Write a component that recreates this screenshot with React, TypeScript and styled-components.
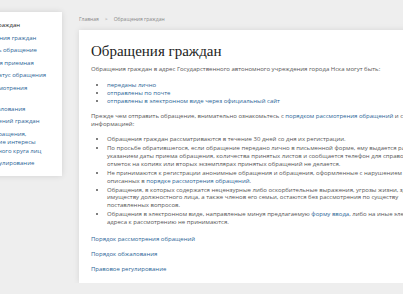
import React from "react";
import styled, { createGlobalStyle } from "styled-components";

const GlobalStyle = createGlobalStyle`
  html, body {
    margin: 0;
    padding: 0;
    background: #eeeeee;
    overflow: hidden;
  }
  body {
    font-family: "Open Sans", "Noto Sans", sans-serif;
    color: #555;
  }
`;

const sideItems = [
  { label: "Обращения граждан", active: true },
  { label: "Виды обращения граждан" },
  { label: "Как отправить обращение" },
  { label: "Общественная приемная" },
  { label: "Проверить статус обращения" },
  { label: "Порядок рассмотрения" },
  { label: "Порядок обжалования", group: true },
  { label: "Обзор обращений граждан" },
  { label: "Ответы на обращения, затрагивающие интересы неопределенного круга лиц" },
  { label: "Правовое регулирование" },
];

function App() {
  return (
    <>
      <GlobalStyle />
      <Page>
        <Sidebar>
          {sideItems.map((item) => (
            <SideLink key={item.label} $active={item.active} $group={item.group}>
              {item.label}
            </SideLink>
          ))}
        </Sidebar>

        <Main>
          <Breadcrumbs>
            <Crumb>Главная</Crumb>
            <Sep>&gt;</Sep>
            <Crumb>Обращения граждан</Crumb>
          </Breadcrumbs>

          <Card>
            <Title>Обращения граждан</Title>
            <Paragraph>
              Обращения граждан в адрес Государственного автономного учреждения города Нска могут быть:
            </Paragraph>
            <List>
              <Item><Link>переданы лично</Link></Item>
              <Item><Link>отправлены по почте</Link></Item>
              <Item><Link>отправлены в электронном виде через официальный сайт</Link></Item>
            </List>

            <Paragraph>
              Прежде чем отправить обращение, внимательно ознакомьтесь с{" "}
              <Link>порядком рассмотрения обращений</Link> и следующей
              <br />
              информацией:
            </Paragraph>
            <List $rules>
              <Item $rules>Обращения граждан рассматриваются в течение 30 дней со дня их регистрации.</Item>
              <Item $rules>
                По просьбе обратившегося, если обращение передано лично в письменной форме, ему выдается расписка с
                <br />
                указанием даты приема обращения, количества принятых листов и сообщается телефон для справок. Подобных
                <br />
                отметок на копиях или вторых экземплярах принятых обращений не делается.
              </Item>
              <Item $rules>
                Не принимаются к регистрации анонимные обращения и обращения, оформленные с нарушением требований,
                <br />
                описанных в <Link>порядке рассмотрения обращений</Link>.
              </Item>
              <Item $rules>
                Обращения, в которых содержатся нецензурные либо оскорбительные выражения, угрозы жизни, здоровью и
                <br />
                имуществу должностного лица, а также членов его семьи, остаются без рассмотрения по существу
                <br />
                поставленных вопросов.
              </Item>
              <Item $rules>
                Обращения в электронном виде, направленые минуя предлагаемую <Link>форму ввода</Link>, либо на иные электронные
                <br />
                адреса к рассмотрению не принимаются.
              </Item>
            </List>

            <Footer>
              <Link>Порядок рассмотрения обращений</Link>
              <Link>Порядок обжалования</Link>
              <Link>Правовое регулирование</Link>
            </Footer>
          </Card>
        </Main>
      </Page>
    </>
  );
}

export default App;

const Page = styled.div`
  display: flex;
  align-items: flex-start;
  gap: 17px;
  margin-left: -53px;
  padding-top: 12px;
`;

const Sidebar = styled.nav`
  flex: none;
  width: 115px;
  box-sizing: border-box;
  padding: 9px 11px 8px 12px;
  background: #fff;
  box-shadow: 0 0 6px rgba(0, 0, 0, 0.12);
  display: flex;
  flex-direction: column;
  gap: 4px;
`;

const SideLink = styled.a<{ $active?: boolean; $group?: boolean }>`
  font-size: 6px;
  line-height: 8.5px;
  color: ${(p) => (p.$active ? "#222" : "#2a6496")};
  margin-top: ${(p) => (p.$group ? "8.5px" : "0")};
  cursor: pointer;
`;

const Main = styled.div`
  flex: none;
  display: flex;
  flex-direction: column;
`;

const Breadcrumbs = styled.div`
  display: flex;
  align-items: center;
  gap: 6px;
  height: 14px;
  margin-bottom: 4px;
  font-size: 5px;
  color: #888;
`;

const Crumb = styled.span``;

const Sep = styled.span`
  color: #999;
`;

const Card = styled.div`
  width: 440px;
  box-sizing: border-box;
  padding: 12px 12px 10px;
  background: #fff;
  box-shadow: 0 0 6px rgba(0, 0, 0, 0.1);
`;

const Title = styled.h1`
  margin: 0 0 5px;
  font-family: "Liberation Serif", "DejaVu Serif", serif;
  font-weight: normal;
  font-size: 15px;
  line-height: 18px;
  color: #222;
`;

const Paragraph = styled.p`
  margin: 0 0 8px;
  font-size: 6px;
  line-height: 8px;
  white-space: nowrap;
`;

const List = styled.ul<{ $rules?: boolean }>`
  margin: 0 0 ${(p) => (p.$rules ? "0" : "7px")};
  padding: 0 0 0 16px;
  display: flex;
  flex-direction: column;
  gap: ${(p) => (p.$rules ? "1.5px" : "0")};
`;

const Item = styled.li<{ $rules?: boolean }>`
  font-size: 6px;
  line-height: ${(p) => (p.$rules ? "7.7px" : "8px")};
  white-space: nowrap;
`;

const Link = styled.a`
  color: #2a6496;
  cursor: pointer;
`;

const Footer = styled.div`
  display: flex;
  flex-direction: column;
  gap: 7px;
  margin-top: 8px;
  font-size: 6px;
  line-height: 8px;
`;
